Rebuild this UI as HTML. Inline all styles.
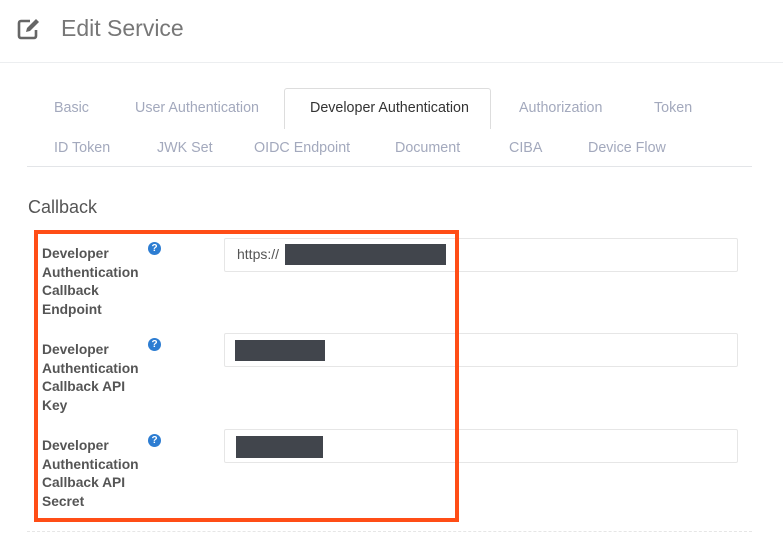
<!DOCTYPE html>
<html><head><meta charset="utf-8"><style>
*{margin:0;padding:0;box-sizing:border-box}
body{width:783px;height:553px;background:#fff;font-family:"Liberation Sans",sans-serif;position:relative;overflow:hidden}
.a{position:absolute;white-space:nowrap}
.tab{position:absolute;font-size:14.3px;color:#a3a9bd;white-space:nowrap}
.lbl{position:absolute;left:42px;font-size:13.8px;font-weight:bold;color:#555;line-height:18.5px}
.help{position:absolute;left:148px;width:13px;height:13px;border-radius:50%;background:#2d7dd2;color:#fff;font-size:10px;font-weight:bold;text-align:center;line-height:13px}
.inp{position:absolute;left:224px;width:514px;height:34px;border:1px solid #e6e6e6;border-radius:2px}
.red{position:absolute;background:#41454c}
</style></head><body>
<svg class="a" style="left:16px;top:17px" width="26" height="24" viewBox="0 0 26 24"><path d="M14 4H5a2 2 0 0 0-2 2v13a2 2 0 0 0 2 2h13a2 2 0 0 0 2-2v-6" fill="none" stroke="#666" stroke-width="2.6"/><path d="M10 15l1-4 9-9 3 3-9 9z" fill="#666"/></svg>
<div class="a" style="left:61px;top:15px;font-size:23px;color:#777">Edit Service</div>
<div class="a" style="left:0;top:62px;width:783px;height:1px;background:#eceef0"></div>
<div class="a" style="left:284px;top:88px;width:207px;height:41px;border:1px solid #ddd;border-bottom:none;border-radius:3px 3px 0 0;background:#fff"></div>
<div class="tab" style="left:54px;top:100px">Basic</div>
<div class="tab" style="left:135px;top:100px">User Authentication</div>
<div class="tab" style="left:310px;top:100px;color:#333">Developer Authentication</div>
<div class="tab" style="left:519px;top:100px">Authorization</div>
<div class="tab" style="left:654px;top:100px">Token</div>
<div class="tab" style="left:54px;top:140px">ID Token</div>
<div class="tab" style="left:157px;top:140px">JWK Set</div>
<div class="tab" style="left:254px;top:140px">OIDC Endpoint</div>
<div class="tab" style="left:395px;top:140px">Document</div>
<div class="tab" style="left:509px;top:140px">CIBA</div>
<div class="tab" style="left:588px;top:140px">Device Flow</div>
<div class="a" style="left:27px;top:166px;width:725px;height:1px;background:#e3e5e8"></div>
<div class="a" style="left:28px;top:197px;font-size:18px;color:#555">Callback</div>
<div class="inp" style="top:238px"></div>
<div class="a" style="left:237px;top:246px;font-size:14px;color:#555">https://</div>
<div class="red" style="left:285px;top:244px;width:161px;height:21px"></div>
<div class="inp" style="top:333px"></div>
<div class="red" style="left:235px;top:340px;width:90px;height:21px"></div>
<div class="inp" style="top:429px"></div>
<div class="red" style="left:236px;top:436px;width:87px;height:22px"></div>
<div class="lbl" style="top:245px">Developer<br>Authentication<br>Callback<br>Endpoint</div>
<div class="lbl" style="top:341px">Developer<br>Authentication<br>Callback API<br>Key</div>
<div class="lbl" style="top:437px">Developer<br>Authentication<br>Callback API<br>Secret</div>
<div class="help" style="left:148px;top:242px">?</div>
<div class="help" style="left:148px;top:338px">?</div>
<div class="help" style="left:148px;top:434px">?</div>
<div class="a" style="left:34px;top:230px;width:425px;height:292px;border:4px solid #ff4d16"></div>
<div class="a" style="left:27px;top:531px;width:725px;border-top:1px dashed #e6e6e6"></div>
</body></html>
